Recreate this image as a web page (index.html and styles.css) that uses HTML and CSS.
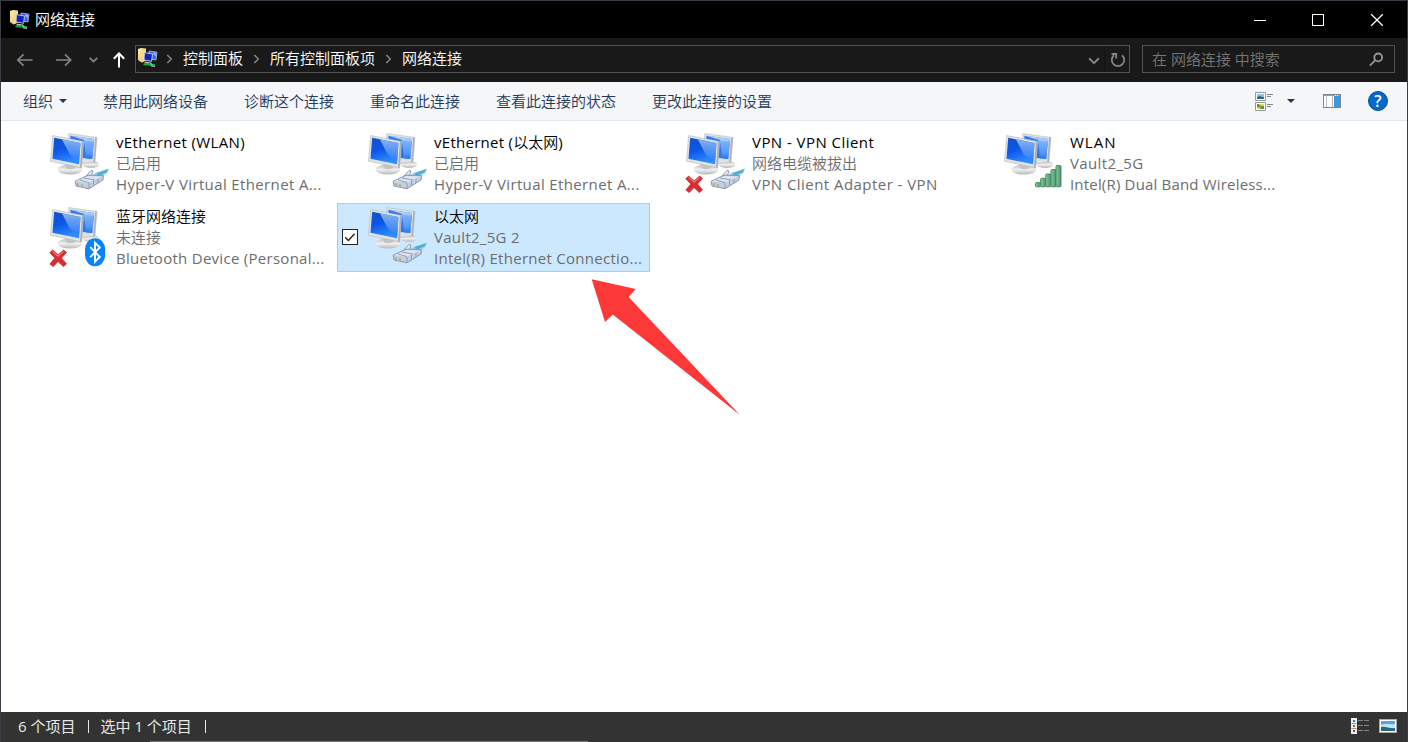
FILE: index.html
```html
<!DOCTYPE html>
<html lang="zh-CN">
<head>
    <meta charset="UTF-8">
    <meta name="viewport" content="width=device-width, initial-scale=1.0">
    <title>网络连接</title>
    <link rel="stylesheet" href="styles.css">
</head>
<body>
    <!-- Shared icons -->
    <svg class="defs" width="0" height="0">
        <defs>
            <linearGradient id="screen" x1="0" y1="0" x2="0.3" y2="1">
                <stop offset="0" stop-color="#1450c4"/>
                <stop offset="0.5" stop-color="#0b56ea"/>
                <stop offset="1" stop-color="#2f8cff"/>
            </linearGradient>
            <linearGradient id="shine" x1="0" y1="0" x2="0" y2="1">
                <stop offset="0" stop-color="#bcdcfa"/>
                <stop offset="1" stop-color="#2878f4"/>
            </linearGradient>
            <linearGradient id="stand" x1="0" y1="0" x2="0" y2="1">
                <stop offset="0" stop-color="#b9bbbd"/>
                <stop offset="0.5" stop-color="#f0f0f0"/>
                <stop offset="1" stop-color="#b4b6b8"/>
            </linearGradient>
            <linearGradient id="bar" x1="0" y1="0" x2="1" y2="0">
                <stop offset="0" stop-color="#8ccaa0"/>
                <stop offset="1" stop-color="#46956a"/>
            </linearGradient>
            <linearGradient id="folder" x1="0" y1="0" x2="1" y2="1">
                <stop offset="0" stop-color="#fff3b8"/>
                <stop offset="1" stop-color="#dfb650"/>
            </linearGradient>
        </defs>
        <symbol id="computers" viewBox="0 0 64 64">
            <ellipse cx="43" cy="34.5" rx="8.5" ry="3.5" fill="url(#stand)"/>
            <path d="M20.8 3.6L48.9 7.4L46.9 32.2L34 33.5L20 24z" fill="#dfe1e2" stroke="#b8bbbd" stroke-width=".6"/>
            <path d="M46.9 32.2L48.9 7.4L47.2 7.1L45.2 32z" fill="#b0b3b5"/>
            <path d="M22.5 5.8L46 9L44.2 29L35 28L22 22z" fill="#2c76f0"/>
            <path d="M22.5 5.8L46 9L44.2 29L38 28.3L36 10z" fill="url(#shine)"/>
            <path d="M37 10.8L46 12L44.6 25L38 24z" fill="#5c9ff6" opacity=".5"/>
            <ellipse cx="22" cy="39.6" rx="12.3" ry="5" fill="url(#stand)"/>
            <path d="M17.5 33L27.5 35L27 38.3C23 40 20 39.3 17.5 38z" fill="#c2c4c6"/>
            <path d="M4.7 5.5L35.6 11.4L33.6 37.8L2.5 31.2z" fill="#e1e3e4" stroke="#b4b7ba" stroke-width=".6"/>
            <path d="M35.6 11.4L33.6 37.8L32 37.4L33.9 11z" fill="#abaeb0"/>
            <path d="M6.2 7.7L32.5 13L31 34.2L4.5 28.8z" fill="url(#screen)"/>
            <path d="M14 9.4L32.5 13L31.2 31L22 25z" fill="url(#shine)" opacity=".7"/>
        </symbol>
        <symbol id="cable" viewBox="0 0 64 64">
            <path d="M44 47C47 41 51 42.5 54 41L61 38.6L59.5 43L50 48z" fill="#98cfe6"/>
            <path d="M49 43L60.5 39L58 42.5L50 46z" fill="#4aaed9"/>
            <path d="M38 46L43 40.5L45 41L43 47z" fill="#e3eaf5" stroke="#7c8aa2" stroke-width=".8"/>
            <path d="M27.2 51.2L40 45.2L55.5 45.5L55 50L41 58.8L28 56z" fill="#c3cee2" stroke="#8290aa" stroke-width=".9"/>
            <path d="M28 51.2L40.5 46L53.5 46.6L41 52.8z" fill="#dfe6f1"/>
            <path d="M41 53L41 58M45.5 50.5L45.5 55.5M32 50L41 52.6M36 48L47 50M50 49L50 53" stroke="#8996ae" stroke-width=".9" fill="none"/>
            <path d="M29 53L31 53.5V55.8L29 55.4zM33 54L35 54.4V57L33 56.6z" fill="#b4b069"/>
        </symbol>
        <symbol id="cross" viewBox="0 0 64 64">
            <path d="M4.6 46L10.2 50.8L15.5 46L18.5 48.4L13.5 54L18.5 60L15.3 62.6L10 57.4L5.3 62.6L1.9 60L6.9 54L1.8 48.8z" fill="#dd2a2c" stroke="#b92228" stroke-width=".7" stroke-linejoin="round"/>
            <path d="M4.5 47.4L10.2 52.3L15.5 47.4" stroke="#f37674" stroke-width="1.2" fill="none"/>
        </symbol>
        <symbol id="bluetooth" viewBox="0 0 64 64">
            <rect x="37" y="34.2" width="20.2" height="28" rx="9.8" ry="11" fill="#0784fb"/>
            <path d="M42.2 43.2L51.8 53L47 57.7V38.7L51.8 43.4L42.2 53.2" fill="none" stroke="#fff" stroke-width="1.9"/>
        </symbol>
        <symbol id="signal" viewBox="0 0 64 64">
            <g fill="url(#bar)" stroke="#3c8659" stroke-width=".9">
                <rect x="33.5" y="52.6" width="5" height="4.2" rx="1"/>
                <rect x="38.6" y="48.3" width="5" height="8.5" rx="1"/>
                <rect x="43.8" y="44" width="5" height="12.8" rx="1"/>
                <rect x="49" y="39.5" width="5" height="17.3" rx="1"/>
                <rect x="54" y="35.6" width="5" height="21.2" rx="1"/>
            </g>
        </symbol>
        <symbol id="netfolder" viewBox="0 0 20 20">
            <path d="M0 1L3 0L8 .6V12.5L3.5 14.5L0 12z" fill="url(#folder)"/>
            <path d="M3.4 2.5L8 1.2V12.5L3.5 14.5z" fill="#f4dc8b"/>
            <path d="M11 3L19 4.2L18 12L11 11z" fill="#3a5fe8" stroke="#b7c4cf" stroke-width=".8"/>
            <path d="M6.5 4.6L14.5 6L13.6 13.3L6 12z" fill="#1321c4" stroke="#c9d3da" stroke-width=".9"/>
            <path d="M14.5 4.5L18 5L17.5 9z" fill="#9fbcff"/>
            <path d="M7 13.8L12 14.3L11 15.8L6 15.2z" fill="#bcc5c8"/>
            <path d="M5.5 16.4L17 17" stroke="#1fa64a" stroke-width="1.8"/>
            <path d="M12 14.5L14.5 17.5" stroke="#4fdd78" stroke-width="1.6"/>
            <path d="M13 18L17 18.4" stroke="#a9b3b7" stroke-width="1.2"/>
        </symbol>
    </svg>

    <div class="window">
        <header class="titlebar">
            <svg class="app-icon" width="20" height="20"><use href="#netfolder"/></svg>
            <span class="title">网络连接</span>
            <div class="window-buttons">
                <svg width="58" height="36"><path d="M23 18.5h12" stroke="#fff"/></svg>
                <svg width="58" height="36"><rect x="23.5" y="12.5" width="11" height="11" fill="none" stroke="#fff"/></svg>
                <svg width="60" height="36"><path d="M24.2 12.2l11.6 11.6M35.8 12.2l-11.6 11.6" stroke="#fff" stroke-width="1.3"/></svg>
            </div>
        </header>

        <nav class="navbar">
            <svg class="nav-arrows" width="134" height="44" fill="none">
                <path d="M31.5 22H17M22.5 16.3L16.8 22l5.7 5.7" stroke="#858585" stroke-width="1.7"/>
                <path d="M55 22h14.5M64 16.3l5.7 5.7l-5.7 5.7" stroke="#858585" stroke-width="1.7"/>
                <path d="M88.7 19.8l3.8 3.8l3.8-3.8" stroke="#858585" stroke-width="1.8"/>
                <path d="M118 29.5V15.8M112.8 20.7l5.2-5.2l5.2 5.2" stroke="#fff" stroke-width="2"/>
            </svg>
            <div class="address">
                <svg class="address-icon" width="20" height="20"><use href="#netfolder"/></svg>
                <svg class="sep" width="9" height="12"><path d="M1.3 2l4 4l-4 4" fill="none" stroke="#858585" stroke-width="1.5"/></svg>
                <span>控制面板</span>
                <svg class="sep" width="9" height="12"><path d="M1.3 2l4 4l-4 4" fill="none" stroke="#858585" stroke-width="1.5"/></svg>
                <span>所有控制面板项</span>
                <svg class="sep" width="9" height="12"><path d="M1.3 2l4 4l-4 4" fill="none" stroke="#858585" stroke-width="1.5"/></svg>
                <span>网络连接</span>
                <svg class="address-tools" width="46" height="26" fill="none">
                    <path d="M6.1 12.3l4.9 4.9l4.9-4.9" stroke="#858585" stroke-width="2"/>
                    <path d="M21.5 0v26" stroke="#131313"/>
                    <path d="M39 9.2A6.2 6.2 0 1 1 31 9.2M28.6 8h4.6v4.6" stroke="#858585" stroke-width="1.8"/>
                </svg>
            </div>
            <div class="search">
                <span>在 网络连接 中搜索</span>
                <svg width="16" height="16" fill="none" stroke="#999" stroke-width="1.8"><circle cx="10.2" cy="6.4" r="3.9"/><path d="M7.4 9.2L1.9 14.6"/></svg>
            </div>
        </nav>

        <div class="toolbar">
            <span class="organize">组织<i class="caret"></i></span>
            <span>禁用此网络设备</span>
            <span>诊断这个连接</span>
            <span>重命名此连接</span>
            <span>查看此连接的状态</span>
            <span>更改此连接的设置</span>
            <div class="toolbar-right">
                <svg class="view-icon" width="18" height="19">
                    <path d="M.5.5h10v8H.5zM.5 10.5h10v8H.5z" fill="#fff" stroke="#999"/>
                    <path d="M2 2h7v5H2z" fill="#8fc0f3"/><path d="M2 5l3-1l4 1.5V7H2z" fill="#286b78"/>
                    <path d="M2 12h7v5H2z" fill="#dedb5c"/><path d="M2 12h2v3H2zM6 14h3v3H5z" fill="#4b9f42"/><path d="M3.5 13h2v2.5h-2z" fill="#d85a31"/>
                    <path d="M12 2.5h6M12 4.5h4M12 12.5h6M12 14.5h4" stroke="#858585"/>
                </svg>
                <i class="caret"></i>
                <svg class="pane-icon" width="18" height="14">
                    <rect x=".5" y=".5" width="17" height="13" fill="#fff" stroke="#7e868b"/>
                    <path d="M1 1.5h16" stroke="#979da1"/><path d="M3.5 2v11M9.5 2v11" stroke="#bbb"/>
                    <path d="M11 2h6v11h-6z" fill="#3d98e3"/><path d="M12 1.5h1M14 1.5h1" stroke="#fff"/>
                </svg>
                <span class="help">?</span>
            </div>
        </div>

        <main class="content">
            <div class="item">
                <span class="check"></span>
                <svg class="icon" width="64" height="64"><use href="#computers"/><use href="#cable"/></svg>
                <div class="info">
                    <div class="name latin">vEthernet (WLAN)</div>
                    <div>已启用</div>
                    <div class="latin">Hyper-V Virtual Ethernet A...</div>
                </div>
            </div>
            <div class="item">
                <span class="check"></span>
                <svg class="icon" width="64" height="64"><use href="#computers"/><use href="#cable"/></svg>
                <div class="info">
                    <div class="name"><span class="latin medium">vEthernet (</span>以太网<span class="latin">)</span></div>
                    <div>已启用</div>
                    <div class="latin">Hyper-V Virtual Ethernet A...</div>
                </div>
            </div>
            <div class="item">
                <span class="check"></span>
                <svg class="icon" width="64" height="64"><use href="#computers"/><use href="#cable"/><use href="#cross"/></svg>
                <div class="info">
                    <div class="name latin wide">VPN - VPN Client</div>
                    <div>网络电缆被拔出</div>
                    <div class="latin wide">VPN Client Adapter - VPN</div>
                </div>
            </div>
            <div class="item">
                <span class="check"></span>
                <svg class="icon" width="64" height="64"><use href="#computers"/><use href="#signal"/></svg>
                <div class="info">
                    <div class="name latin wider">WLAN</div>
                    <div class="latin">Vault2_5G</div>
                    <div class="latin narrow">Intel(R) Dual Band Wireless...</div>
                </div>
            </div>
            <div class="item">
                <span class="check"></span>
                <svg class="icon" width="64" height="64"><use href="#computers"/><use href="#bluetooth"/><use href="#cross"/></svg>
                <div class="info">
                    <div class="name">蓝牙网络连接</div>
                    <div>未连接</div>
                    <div class="latin medium">Bluetooth Device (Personal...</div>
                </div>
            </div>
            <div class="item selected">
                <span class="check"><svg width="14" height="14"><path d="M2.2 7.2l3.2 3.2l6.2-6.6" fill="none" stroke="#222" stroke-width="1.4"/></svg></span>
                <svg class="icon" width="64" height="64"><use href="#computers"/><use href="#cable"/></svg>
                <div class="info">
                    <div class="name">以太网</div>
                    <div class="latin medium">Vault2_5G 2</div>
                    <div class="latin medium">Intel(R) Ethernet Connectio...</div>
                </div>
            </div>
        </main>

        <footer class="statusbar">
            <span>6 个项目</span>
            <i class="divider"></i>
            <span>选中 1 个项目</span>
            <i class="divider"></i>
            <div class="status-views">
                <svg width="18" height="16">
                    <path d="M0 0h6v16H0z" fill="#eee"/>
                    <path d="M.5 5.5h5M.5 10.5h5" stroke="#999"/>
                    <path d="M2 2h2v2H2z" fill="#267bb8"/><path d="M2 7h2v2H2z" fill="#7c7428"/><path d="M2 12h2v2H2z" fill="#b33424"/>
                    <path d="M7 2.5h5M13 2.5h5M7 7.5h5M13 7.5h5M7 12.5h5M13 12.5h5" stroke="#858585"/>
                </svg>
                <svg width="18" height="14">
                    <rect x=".5" y=".5" width="17" height="13" fill="#fff" stroke="#aaa"/>
                    <path d="M2 2h14v10H2z" fill="#5c9fea"/><path d="M2 6c4-2 9 0 14-1v4H2z" fill="#c5e3f8"/>
                    <path d="M2 8c5-1 9 2 14 1v3H2z" fill="#286a70"/>
                </svg>
            </div>
            <i class="edge"></i>
        </footer>
    </div>

    <svg class="pointer" width="150" height="138">
        <path d="M1.7 1.2L45.8 10.9L38.6 19L150 137L22.8 36.4L15 44z" fill="#fc3838"/>
    </svg>
</body>
</html>
```
FILE: styles.css
```css
* {
    box-sizing: border-box;
}
body {
    margin: 0;
    font-family: "Open Sans", "Noto Sans CJK SC", sans-serif;
    font-size: 15px;
    font-weight: 350;
    overflow: hidden;
}
svg {
    display: block;
    flex-shrink: 0;
}
.defs {
    position: absolute;
}
.window {
    display: flex;
    flex-direction: column;
    height: 742px;
    border: 1px solid #3c3c46;
    border-bottom: none;
    background-color: #fff;
    white-space: nowrap;
}
.titlebar {
    display: flex;
    align-items: center;
    height: 37px;
    padding-left: 9px;
    background-color: #000;
    color: #fff;
}
.title {
    margin-left: 5px;
    padding-bottom: 2px;
}
.window-buttons {
    display: flex;
    margin-left: auto;
}
.navbar {
    display: flex;
    align-items: center;
    height: 44px;
    padding-right: 12px;
    background-color: #191919;
    color: #fff;
}
.address {
    display: flex;
    align-items: center;
    width: 995px;
    height: 28px;
    margin-top: -2px;
    border: 1px solid #535353;
}
.address-icon {
    margin: -3px 8px 0 2px;
}
.sep {
    margin-right: 8px;
}
.address span {
    margin-right: 10px;
    padding-bottom: 3px;
}
.address-tools {
    margin-left: auto;
}
.search {
    display: flex;
    align-items: center;
    justify-content: space-between;
    width: 253px;
    height: 28px;
    margin: -2px 0 0 12px;
    padding: 0 10px 0 9px;
    border: 1px solid #535353;
    color: #777;
}
.search span {
    padding-bottom: 2px;
}
.toolbar {
    display: flex;
    align-items: center;
    gap: 36px;
    height: 39px;
    padding: 0 19px 0 22px;
    border-bottom: 1px solid #e5e8eb;
    background-color: #f5f6f8;
    color: #1e395b;
}
.toolbar > span {
    padding-bottom: 2px;
}
.organize {
    display: flex;
    align-items: center;
    gap: 6px;
}
.caret {
    border: 4px solid transparent;
    border-top-color: #1e395b;
    border-bottom: none;
}
.organize .caret {
    margin-top: 2px;
}
.toolbar-right {
    display: flex;
    align-items: center;
    margin-left: auto;
}
.toolbar-right .caret {
    margin: 0 28px 0 14px;
}
.help {
    width: 20px;
    height: 20px;
    margin-left: 27px;
    border: 1px solid #0b4f9c;
    border-radius: 50%;
    background-color: #0469cd;
    color: #fff;
    font-size: 16px;
    font-weight: 600;
    line-height: 18px;
    text-align: center;
}
.content {
    display: grid;
    grid-template-columns: repeat(4, 313px);
    grid-auto-rows: 69px;
    align-content: start;
    gap: 5px;
    flex: 1;
    padding: 8px 0 0 18px;
}
.item {
    display: flex;
    padding-left: 4px;
    border: 1px solid transparent;
    color: #6d6d6d;
}
.selected {
    border-color: #99d1ff;
    background-color: #cce8ff;
}
.check {
    width: 16px;
    height: 16px;
    margin: 25px 8px 0 0;
}
.selected .check {
    border: 1px solid #222;
    background-color: #fff;
}
.info {
    margin: 2px 0 0 4px;
    line-height: 21px;
}
.info div {
    height: 21px;
}
.name {
    color: #000;
}
.latin {
    font-weight: 400;
    letter-spacing: 0.37px;
}
.narrow {
    letter-spacing: 0.18px;
}
.medium {
    letter-spacing: 0.28px;
}
.wide {
    letter-spacing: 0.45px;
}
.wider {
    letter-spacing: 1px;
}
.statusbar {
    display: flex;
    align-items: center;
    height: 30px;
    padding: 0 10px 2px 17px;
    background-color: #333;
    color: #e8e8e8;
    font-weight: 400;
    position: relative;
}
.statusbar span {
    padding-bottom: 2px;
}
.divider {
    width: 1px;
    height: 13px;
    margin: 0 11px 0 13px;
    background-color: #e8e8e8;
}
.status-views {
    display: flex;
    align-items: center;
    gap: 10px;
    margin-left: auto;
}
.edge {
    position: absolute;
    left: 149px;
    bottom: 0;
    width: 438px;
    height: 1px;
    background-color: #777;
}
.pointer {
    position: absolute;
    left: 590px;
    top: 278px;
}
```
